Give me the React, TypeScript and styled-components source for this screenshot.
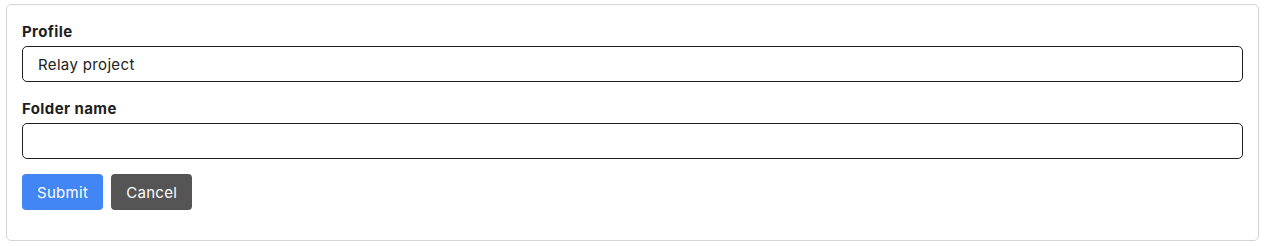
import React from 'react'
import styled, { createGlobalStyle } from 'styled-components'

const GlobalStyle = createGlobalStyle`
  body {
    margin: 0;
    background: #ffffff;
    font-family: Inter, "Noto Sans", sans-serif;
    color: #212121;
  }
`

const StyledCard = styled.form`
  margin: 4px 6px 0;
  padding: 16px 15px 30px;
  border: 1px solid #d4d4d4;
  border-radius: 5px;
  display: flex;
  flex-direction: column;
`

const StyledField = styled.div`
  display: flex;
  flex-direction: column;
  gap: 3px;
  margin-bottom: 16px;
`

const StyledLabel = styled.label`
  font-size: 15px;
  font-weight: 700;
  line-height: 22px;
  letter-spacing: 0.4px;
  color: #1e1e1e;
`

const StyledInput = styled.input`
  box-sizing: border-box;
  height: 36px;
  padding: 0 15px;
  border: 1px solid #1f1f1f;
  border-radius: 5px;
  font-family: inherit;
  font-size: 15px;
  letter-spacing: 0.35px;
  color: #222;
  background: #fff;
  outline: none;
`

const StyledActions = styled.div`
  display: flex;
  gap: 8px;
  margin-top: -1px;
`

interface StyledButtonProps {
  $variant: 'primary' | 'secondary'
}

const StyledButton = styled.button<StyledButtonProps>`
  height: 36px;
  padding: 0 15px;
  border: none;
  border-radius: 4px;
  font-family: inherit;
  font-size: 15px;
  letter-spacing: 0.3px;
  color: #fff;
  cursor: pointer;
  background: ${(props) => (props.$variant === 'primary' ? '#4285f4' : '#555555')};
`

const App: React.FC = () => {
  return (
    <>
      <GlobalStyle />
      <StyledCard onSubmit={(e) => e.preventDefault()}>
        <StyledField>
          <StyledLabel>Profile</StyledLabel>
          <StyledInput defaultValue="Relay project" />
        </StyledField>
        <StyledField>
          <StyledLabel>Folder name</StyledLabel>
          <StyledInput />
        </StyledField>
        <StyledActions>
          <StyledButton type="submit" $variant="primary">
            Submit
          </StyledButton>
          <StyledButton type="button" $variant="secondary">
            Cancel
          </StyledButton>
        </StyledActions>
      </StyledCard>
    </>
  )
}

export default App
